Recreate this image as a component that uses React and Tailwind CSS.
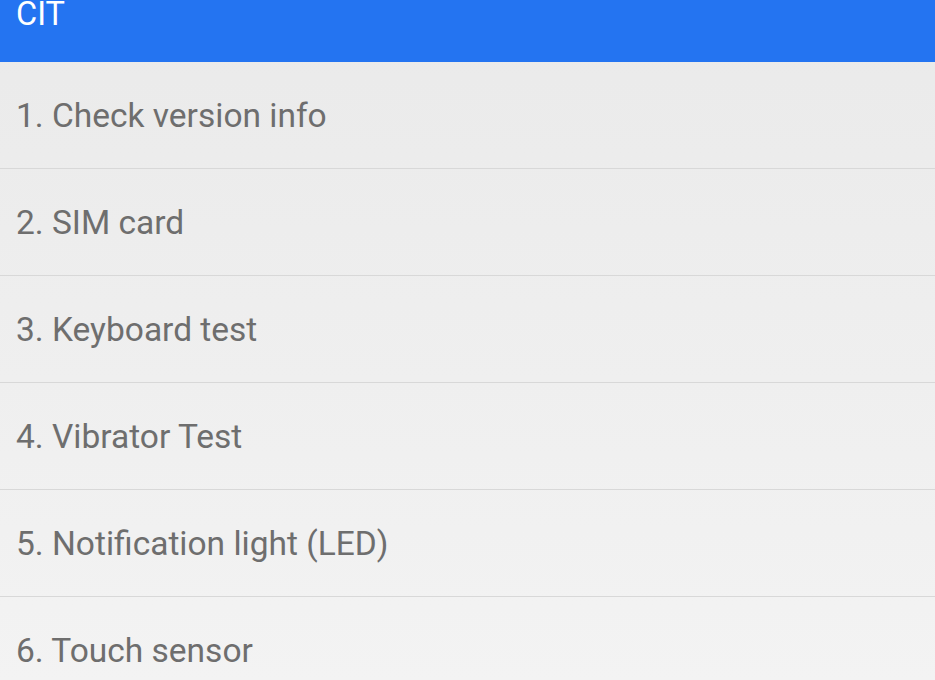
const ITEMS = [
  '1. Check version info',
  '2. SIM card',
  '3. Keyboard test',
  '4. Vibrator Test',
  '5. Notification light (LED)',
  '6. Touch sensor',
  '7. Camera test',
]

export default function App() {
  return (
    <div className="w-[935px] h-[680px] overflow-hidden bg-gradient-to-b from-[#eaeaea] to-[#f3f3f3] font-['Roboto',sans-serif]">
      {/* Action bar */}
      <div className="h-[62px] bg-[#2474f1] px-4 flex items-start overflow-hidden">
        <div className="text-[32.5px] leading-none text-white -mt-[2px]">CIT</div>
      </div>

      {/* Test list */}
      <ul>
        {ITEMS.map((item) => (
          <li
            key={item}
            className="h-[107px] border-b border-[#d8d8d8] px-4 pt-[2px] flex items-center text-[33.5px] text-[#6e6e6e]"
          >
            {item}
          </li>
        ))}
      </ul>
    </div>
  )
}
